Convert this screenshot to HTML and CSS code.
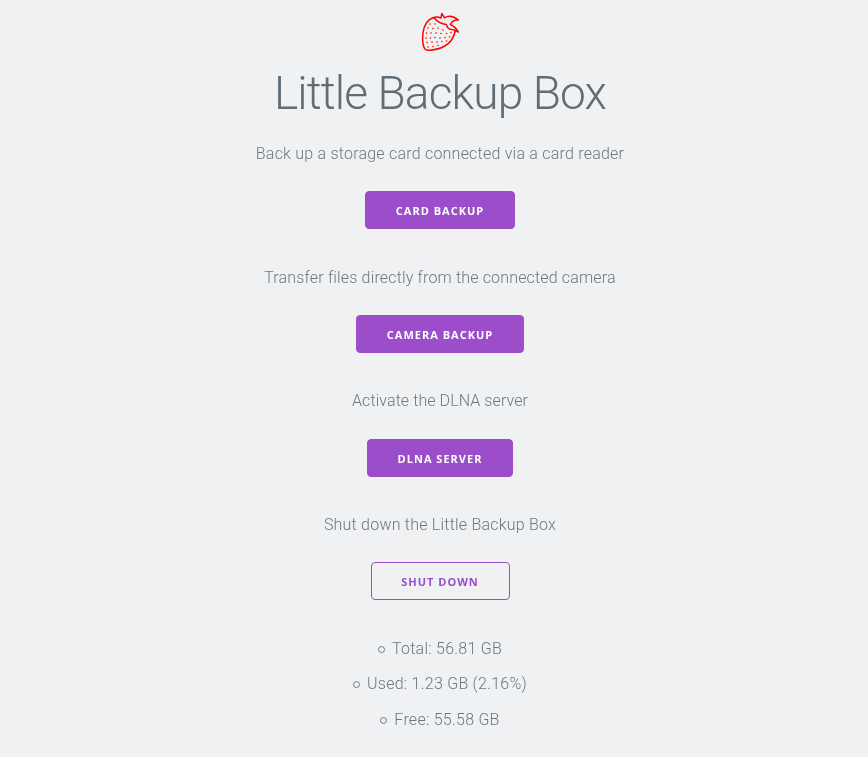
FILE: index.html
```html
<!DOCTYPE html>
<html lang="en">
  <head>
    <meta charset="UTF-8" />
    <meta name="viewport" content="width=device-width, initial-scale=1.0" />
    <title>Little Backup Box</title>
    <link rel="stylesheet" href="styles.css">
  </head>
  <body>
    <div class="logo">
      <svg width="40" height="40" viewBox="0 0 40 40" fill="none" stroke="#f00" stroke-linecap="round" stroke-linejoin="round">
        <path stroke-width="1.5" d="M13 4.700C7.500 6.500 4 12 3 20c-.7 6-.5 12 1.500 15.500 1 1.700 3 2 5.500 1.700 5-.5 10-1.500 14-3.700 6-3 10-9 11.500-16.500" />
        <path stroke-width="1.5" d="M13 4.700c3-1 5.500-.7 8 .3L21.700 .5 24.500 4.800c4-2.300 8.500-2.300 13.800 2.200-3-.5-6 .7-8 4.500 3.500 1.500 6.200 3.800 8 7.500-3.300-1.800-6.300-2.800-9-3-1.500-1-2.500-2.500-3-4.500-4.500-.5-9-2.800-12.300-6.800z" />
        <g fill="#f00" stroke="none">
          <circle cx="10" cy="11" r=".8" /><circle cx="15" cy="11" r=".8" />
          <circle cx="8" cy="15" r=".8" /><circle cx="13" cy="15.500" r=".8" /><circle cx="18" cy="15" r=".8" /><circle cx="23" cy="17" r=".8" />
          <circle cx="6.500" cy="20" r=".8" /><circle cx="11" cy="20" r=".8" /><circle cx="16" cy="20" r=".8" /><circle cx="21" cy="20.500" r=".8" /><circle cx="26.500" cy="20.500" r=".8" /><circle cx="31" cy="19.500" r=".8" />
          <circle cx="6" cy="25" r=".8" /><circle cx="10.500" cy="25" r=".8" /><circle cx="15" cy="24.500" r=".8" /><circle cx="20" cy="25" r=".8" /><circle cx="25" cy="24.500" r=".8" /><circle cx="29.500" cy="24" r=".8" />
          <circle cx="7" cy="29.500" r=".8" /><circle cx="12" cy="29" r=".8" /><circle cx="17" cy="29" r=".8" /><circle cx="22" cy="28.500" r=".8" /><circle cx="26.500" cy="28" r=".8" />
          <circle cx="8" cy="34" r=".8" /><circle cx="13" cy="33.500" r=".8" /><circle cx="18" cy="32.500" r=".8" />
        </g>
      </svg>
    </div>
    <h1>Little Backup Box</h1>

    <p class="wide">Back up a storage card connected via a card reader</p>
    <a class="button card-btn" href="#">Card backup</a>

    <p>Transfer files directly from the connected camera</p>
    <a class="button camera-btn" href="#">Camera backup</a>

    <p class="tight">Activate the DLNA server</p>
    <a class="button dlna-btn" href="#">DLNA server</a>

    <p class="wide">Shut down the Little Backup Box</p>
    <a class="button button-outline shutdown-btn" href="#">Shut down</a>

    <ul class="stats">
      <li>Total: 56.81 GB</li>
      <li>Used: 1.23 GB (2.16%)</li>
      <li>Free: 55.58 GB</li>
    </ul>
  </body>
</html>
```

FILE: styles.css
```css
html {
  background-color: #eff1f3;
}

body {
  margin: 0;
  padding: 13px 0 0 12px;
  display: flex;
  flex-direction: column;
  align-items: center;
  font-family: Roboto, sans-serif;
  font-weight: 300;
  font-size: 16px;
  letter-spacing: 0.01em;
  color: #6c7781;
  will-change: transform;
}

.logo {
  height: 40px;
}

.logo svg {
  display: block;
}

h1 {
  margin: 10px 0 0;
  font-size: 46px;
  line-height: 60px;
  font-weight: 300;
  letter-spacing: -0.85px;
  color: #606c76;
}

p {
  margin: 0;
  line-height: 24px;
}

p.wide {
  letter-spacing: 0.22px;
}

p.tight {
  letter-spacing: 0.08px;
}

h1 + p {
  margin-top: 18.800px;
}

.button {
  display: block;
  box-sizing: border-box;
  height: 38px;
  line-height: 36px;
  padding-top: 1px;
  margin: 25.200px 0 36.600px;
  border: 1px solid #9b4dca;
  border-radius: 4px;
  background-color: #9b4dca;
  color: #fff;
  font-family: "Open Sans", sans-serif;
  font-size: 11px;
  font-weight: 700;
  letter-spacing: 1px;
  text-align: center;
  text-transform: uppercase;
  text-decoration: none;
}

.card-btn { width: 150px; }
.camera-btn { width: 168px; }
.dlna-btn { width: 146px; }

.shutdown-btn {
  width: 139px;
  background-color: transparent;
  color: #9b4dca;
}

.stats {
  margin: 0;
  padding: 0;
  list-style: none;
  display: flex;
  flex-direction: column;
  align-items: center;
}

.stats li {
  display: flex;
  align-items: center;
  gap: 7px;
  line-height: 24px;
  margin-bottom: 11.400px;
  letter-spacing: 0.25px;
}

.stats li::before {
  content: "";
  box-sizing: border-box;
  width: 7px;
  height: 7px;
  margin-top: 1px;
  border: 1px solid #6c7781;
  border-radius: 50%;
}
```
